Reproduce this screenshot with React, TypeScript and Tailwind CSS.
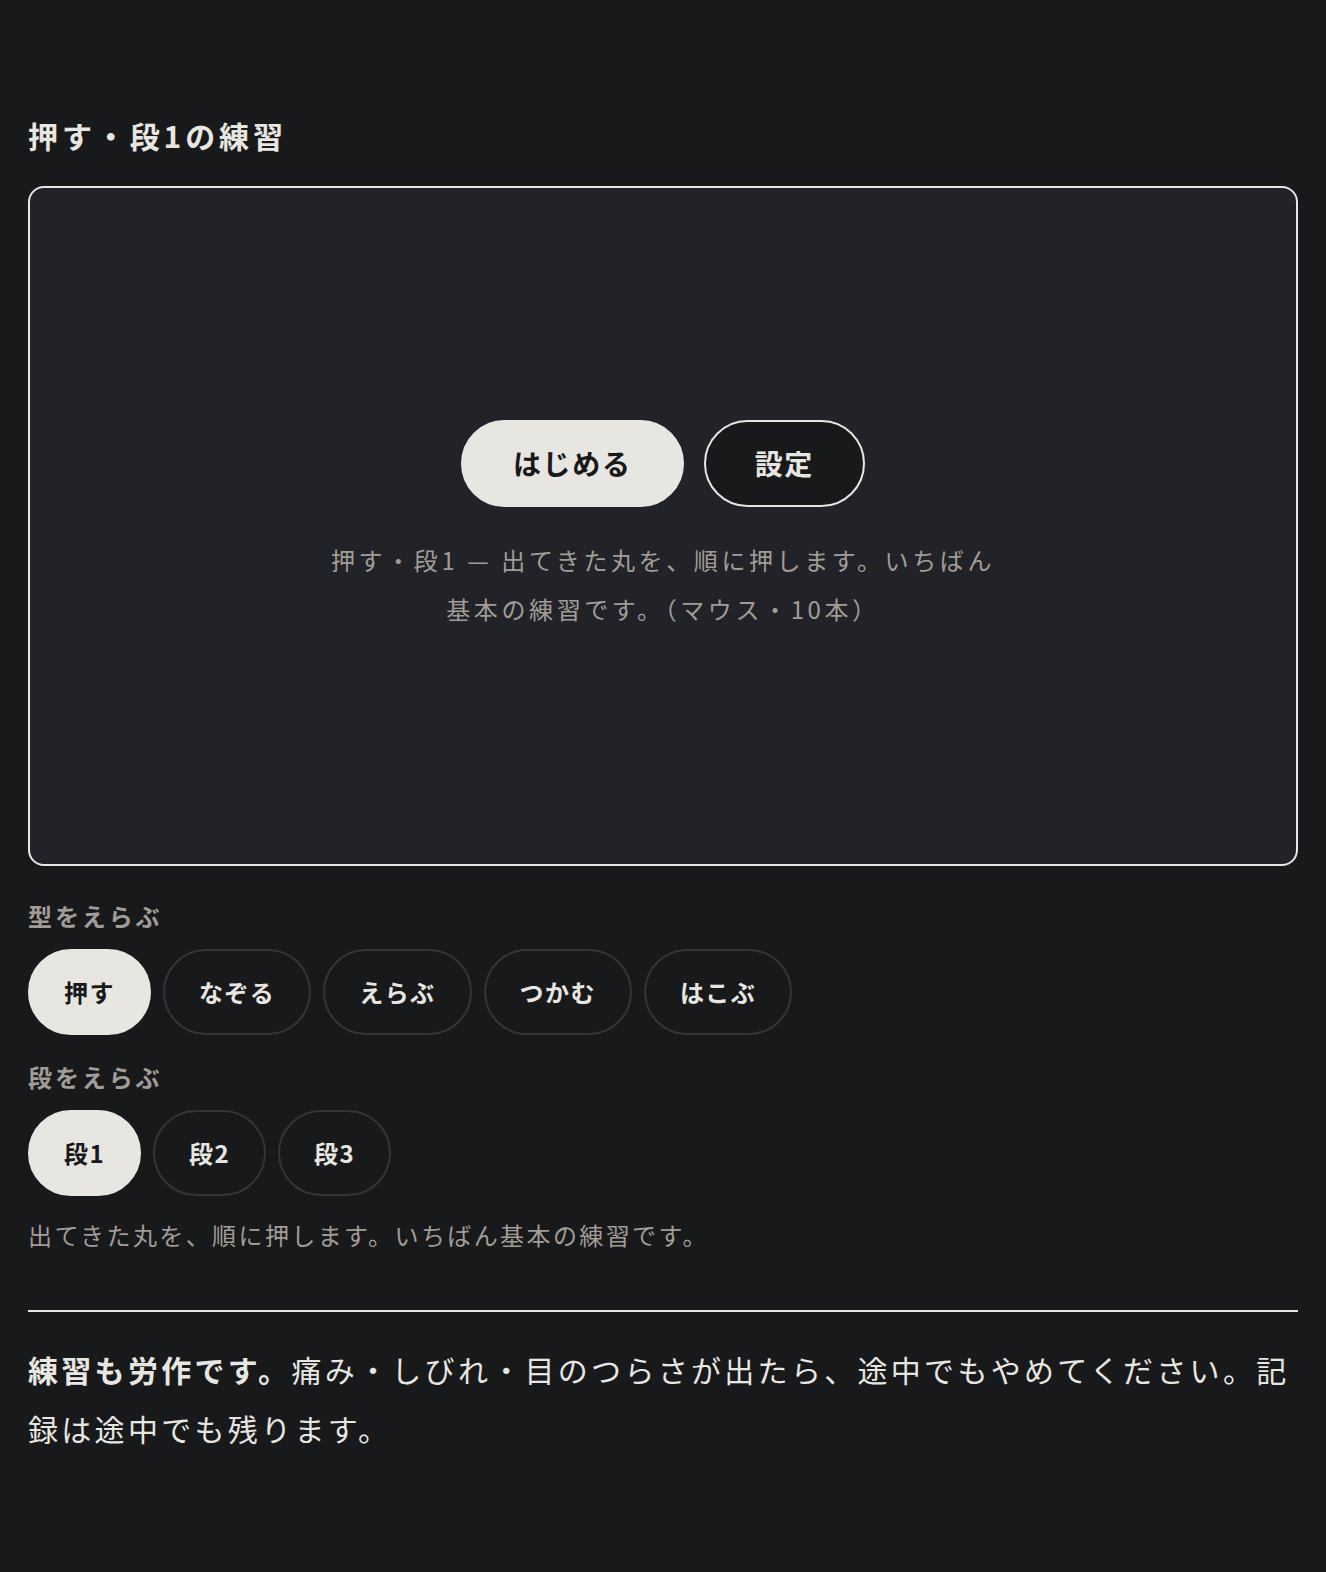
import { useState } from "react"

const KATA = ["押す", "なぞる", "えらぶ", "つかむ", "はこぶ"]
const DAN = ["段1", "段2", "段3"]

function Chip({ label, active, onClick }: { label: string; active: boolean; onClick: () => void }) {
  return (
    <button
      onClick={onClick}
      className={
        active
          ? "h-[86px] rounded-full border-2 border-[#e8e6e0] bg-[#e8e6e0] px-[34px] text-[24px] font-bold tracking-[0.06em] text-[#18191b]"
          : "h-[86px] rounded-full border-2 border-[#34353a] bg-transparent px-[34px] text-[24px] font-bold tracking-[0.06em] text-[#e8e6e0]"
      }
    >
      {label}
    </button>
  )
}

export default function App() {
  const [kata, setKata] = useState(0)
  const [dan, setDan] = useState(0)

  return (
    <div
      className="min-h-screen bg-[#18191b] px-[28px] pt-[111px] pb-[100px] text-[#e8e6e0]"
      style={{ fontFamily: '"Noto Sans CJK JP", "Noto Sans", sans-serif' }}
    >
      <h1 className="text-[30px] font-bold leading-[48px] tracking-[0.13em]">押す・段1の練習</h1>

      {/* Practice stage */}
      <div className="mt-[27px] flex h-[680px] flex-col items-center justify-center rounded-[16px] border-2 border-[#e8e6e0] bg-[#222328]">
        <div className="flex items-center gap-[20px]">
          <button className="h-[87px] rounded-full border-2 border-[#e8e6e0] bg-[#e8e6e0] px-[50px] text-[28px] font-bold tracking-[0.06em] text-[#18191b]">
            はじめる
          </button>
          <button className="h-[87px] rounded-full border-2 border-[#e8e6e0] bg-[#18191b] px-[49px] text-[28px] font-bold tracking-[0.06em] text-[#e8e6e0]">
            設定
          </button>
        </div>
        <p className="mt-[28px] max-w-[690px] text-center text-[24px] leading-[49px] tracking-[0.15em] text-[#a19d96]">
          押す・段1 — 出てきた丸を、順に押します。いちばん基本の練習です。（マウス・10本）
        </p>
      </div>

      {/* Type select */}
      <p className="mt-[32px] text-[24px] font-bold leading-[36px] tracking-[0.12em] text-[#a19d96]">型をえらぶ</p>
      <div className="mt-[15px] flex flex-wrap gap-[12px]">
        {KATA.map((k, i) => (
          <Chip key={k} label={k} active={i === kata} onClick={() => setKata(i)} />
        ))}
      </div>

      {/* Level select */}
      <p className="mt-[24px] text-[24px] font-bold leading-[36px] tracking-[0.12em] text-[#a19d96]">段をえらぶ</p>
      <div className="mt-[15px] flex flex-wrap gap-[12px]">
        {DAN.map((d, i) => (
          <Chip key={d} label={d} active={i === dan} onClick={() => setDan(i)} />
        ))}
      </div>

      <p className="mt-[21px] text-[24px] leading-[36px] tracking-[0.1em] text-[#a19d96]">
        出てきた丸を、順に押します。いちばん基本の練習です。
      </p>

      <hr className="mt-[57px] border-t-2 border-[#e8e6e0]" />

      <p className="mt-[28px] text-[30px] leading-[59px] tracking-[0.11em]">
        <strong className="font-bold">練習も労作です。</strong>
        痛み・しびれ・目のつらさが出たら、途中でもやめてください。記録は途中でも残ります。
      </p>
    </div>
  )
}
